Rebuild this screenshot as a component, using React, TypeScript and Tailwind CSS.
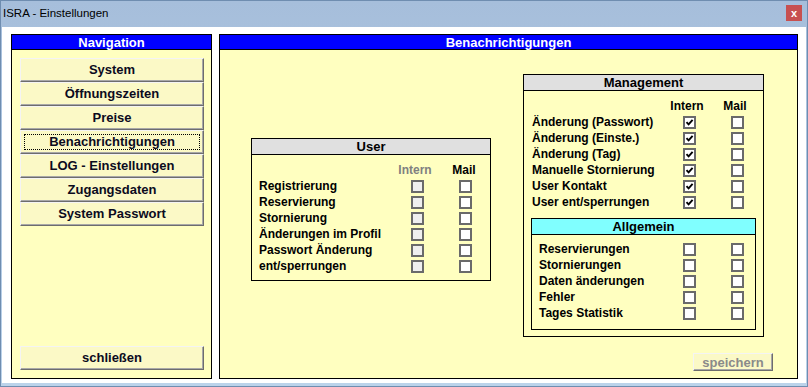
import React from "react";

// ---------------------------
// Data
// ---------------------------
const navItems = [
  "System",
  "Öffnungszeiten",
  "Preise",
  "Benachrichtigungen",
  "LOG - Einstellungen",
  "Zugangsdaten",
  "System Passwort",
];

const userRows = [
  "Registrierung",
  "Reservierung",
  "Stornierung",
  "Änderungen im Profil",
  "Passwort Änderung",
  "ent/sperrungen",
];

const managementRows = [
  "Änderung (Passwort)",
  "Änderung (Einste.)",
  "Änderung (Tag)",
  "Manuelle Stornierung",
  "User Kontakt",
  "User ent/sperrungen",
];

const allgemeinRows = [
  "Reservierungen",
  "Stornierungen",
  "Daten änderungen",
  "Fehler",
  "Tages Statistik",
];

const font = { fontFamily: '"Liberation Sans", Arial, sans-serif' };

// ---------------------------
// Small pieces
// ---------------------------
function Check({ checked = false, disabled = false }: { checked?: boolean; disabled?: boolean }) {
  return (
    <span
      className={
        "flex h-[13px] w-[13px] shrink-0 items-center justify-center border-2 border-[#6a6a6a] " +
        (disabled ? "bg-[#efefef]" : "bg-white")
      }
    >
      {checked && (
        <svg width="9" height="9" viewBox="0 0 9 9">
          <path d="M1.5 4.2 L3.6 6.4 L7.6 1.8" fill="none" stroke="#000" strokeWidth="1.9" />
        </svg>
      )}
    </span>
  );
}

function RaisedButton({
  label,
  focused = false,
  disabled = false,
  className = "",
}: {
  label: string;
  focused?: boolean;
  disabled?: boolean;
  className?: string;
}) {
  return (
    <button
      className={
        "relative flex items-center justify-center border-t border-l border-t-[#f4f4f4] border-l-[#f4f4f4] border-r border-b border-r-[#6d6d6d] border-b-[#6d6d6d] bg-[#fbf9c6] shadow-[inset_-1px_-1px_#a8a8a8] font-bold " +
        (disabled ? "text-[#8a8a8a] " : "text-[#0b0b1e] ") +
        (focused ? "z-10 shadow-[0_0_0_1px_#000,inset_-1px_-1px_#a8a8a8] " : "") +
        className
      }
    >
      {focused && <span className="absolute inset-[3px] border border-dotted border-black" />}
      {label}
    </button>
  );
}

function PanelHeader({ title }: { title: string }) {
  return (
    <div className="flex h-[15px] items-center justify-center border-b border-black bg-[#0000ff] text-[13px] font-bold leading-none text-white">
      {title}
    </div>
  );
}

function BoxHeader({ title, cyan = false }: { title: string; cyan?: boolean }) {
  return (
    <div
      className={
        "flex h-[16px] items-center justify-center border-b border-black text-[13px] font-bold leading-none text-black " +
        (cyan ? "bg-[#80ffff]" : "bg-[#e0e0e0]")
      }
    >
      {title}
    </div>
  );
}

function CheckRow({
  label,
  labelWidth,
  internChecked = false,
  internDisabled = false,
}: {
  label: string;
  labelWidth: string;
  internChecked?: boolean;
  internDisabled?: boolean;
}) {
  return (
    <div className="flex h-[16px] items-center text-[12px] font-bold leading-[16px] text-black">
      <span className={labelWidth + " whitespace-nowrap"}>{label}</span>
      <Check checked={internChecked} disabled={internDisabled} />
      <span className="w-[35px]" />
      <Check />
    </div>
  );
}

// ---------------------------
// App
// ---------------------------
export default function App() {
  return (
    <div
      className="flex h-[387px] w-[808px] flex-col overflow-hidden border border-[#6f8db0] bg-gradient-to-b from-[#a6bedb] to-[#bcd3ea]"
      style={font}
    >
      {/* Title bar */}
      <div className="flex h-[26px] shrink-0 items-center justify-between pl-[2px] pr-[5px]">
        <span className="text-[11.5px] text-black">ISRA - Einstellungen</span>
        <span className="mb-[2px] flex h-[16px] w-[16px] items-center justify-center bg-[#c75050] text-[11px] font-bold leading-none text-white">
          x
        </span>
      </div>

      {/* Client */}
      <div className="mx-[1px] mb-[3px] flex flex-1 gap-[7px] bg-white pb-[4px] pl-[9px] pr-[8px] pt-[7px]">
        {/* Navigation */}
        <div className="flex w-[201px] flex-col border border-black bg-[#ffffc0]">
          <PanelHeader title="Navigation" />
          <div className="ml-[8px] mr-[7px] mt-[8px] flex flex-col">
            {navItems.map((item) => (
              <RaisedButton
                key={item}
                label={item}
                focused={item === "Benachrichtigungen"}
                className="h-[24px] text-[13px]"
              />
            ))}
          </div>
          <div className="mb-[8px] ml-[8px] mr-[7px] mt-auto flex flex-col">
            <RaisedButton label="schließen" className="h-[24px] text-[13px]" />
          </div>
        </div>

        {/* Benachrichtigungen */}
        <div className="flex flex-1 flex-col border border-black bg-[#ffffc0]">
          <PanelHeader title="Benachrichtigungen" />
          <div className="flex flex-1 flex-col">
            <div className="flex items-start pl-[31px] pt-[24px]">
              {/* User */}
              <div className="mt-[64px] w-[240px] border border-black">
                <BoxHeader title="User" />
                <div className="pb-[6px] pl-[7px] pt-[7px]">
                  <div className="flex h-[16px] items-center text-[12px] font-bold leading-[16px]">
                    <span className="w-[136px]" />
                    <span className="w-[40px] text-center text-[#808080]">Intern</span>
                    <span className="ml-[9px] w-[40px] text-center text-black">Mail</span>
                  </div>
                  {userRows.map((r) => (
                    <CheckRow key={r} label={r} labelWidth="w-[152px]" internDisabled />
                  ))}
                </div>
              </div>

              {/* Management */}
              <div className="ml-[32px] w-[241px] border border-black">
                <BoxHeader title="Management" />
                <div className="pb-[6px] pt-[7px]">
                  <div className="pl-[8px]">
                    <div className="flex h-[16px] items-center text-[12px] font-bold leading-[16px] text-black">
                      <span className="w-[135px]" />
                      <span className="w-[40px] text-center">Intern</span>
                      <span className="ml-[8px] w-[40px] text-center">Mail</span>
                    </div>
                    {managementRows.map((r) => (
                      <CheckRow key={r} label={r} labelWidth="w-[151px]" internChecked />
                    ))}
                  </div>

                  {/* Allgemein */}
                  <div className="ml-[7px] mt-[8px] w-[225px] border border-black">
                    <BoxHeader title="Allgemein" cyan />
                    <div className="pb-[8px] pl-[7px] pt-[6px]">
                      {allgemeinRows.map((r) => (
                        <CheckRow key={r} label={r} labelWidth="w-[144px]" />
                      ))}
                    </div>
                  </div>
                </div>
              </div>
            </div>

            <div className="mb-[7px] mr-[24px] mt-auto flex justify-end">
              <RaisedButton label="speichern" disabled className="h-[18px] w-[80px] text-[13px] leading-none" />
            </div>
          </div>
        </div>
      </div>
    </div>
  );
}
